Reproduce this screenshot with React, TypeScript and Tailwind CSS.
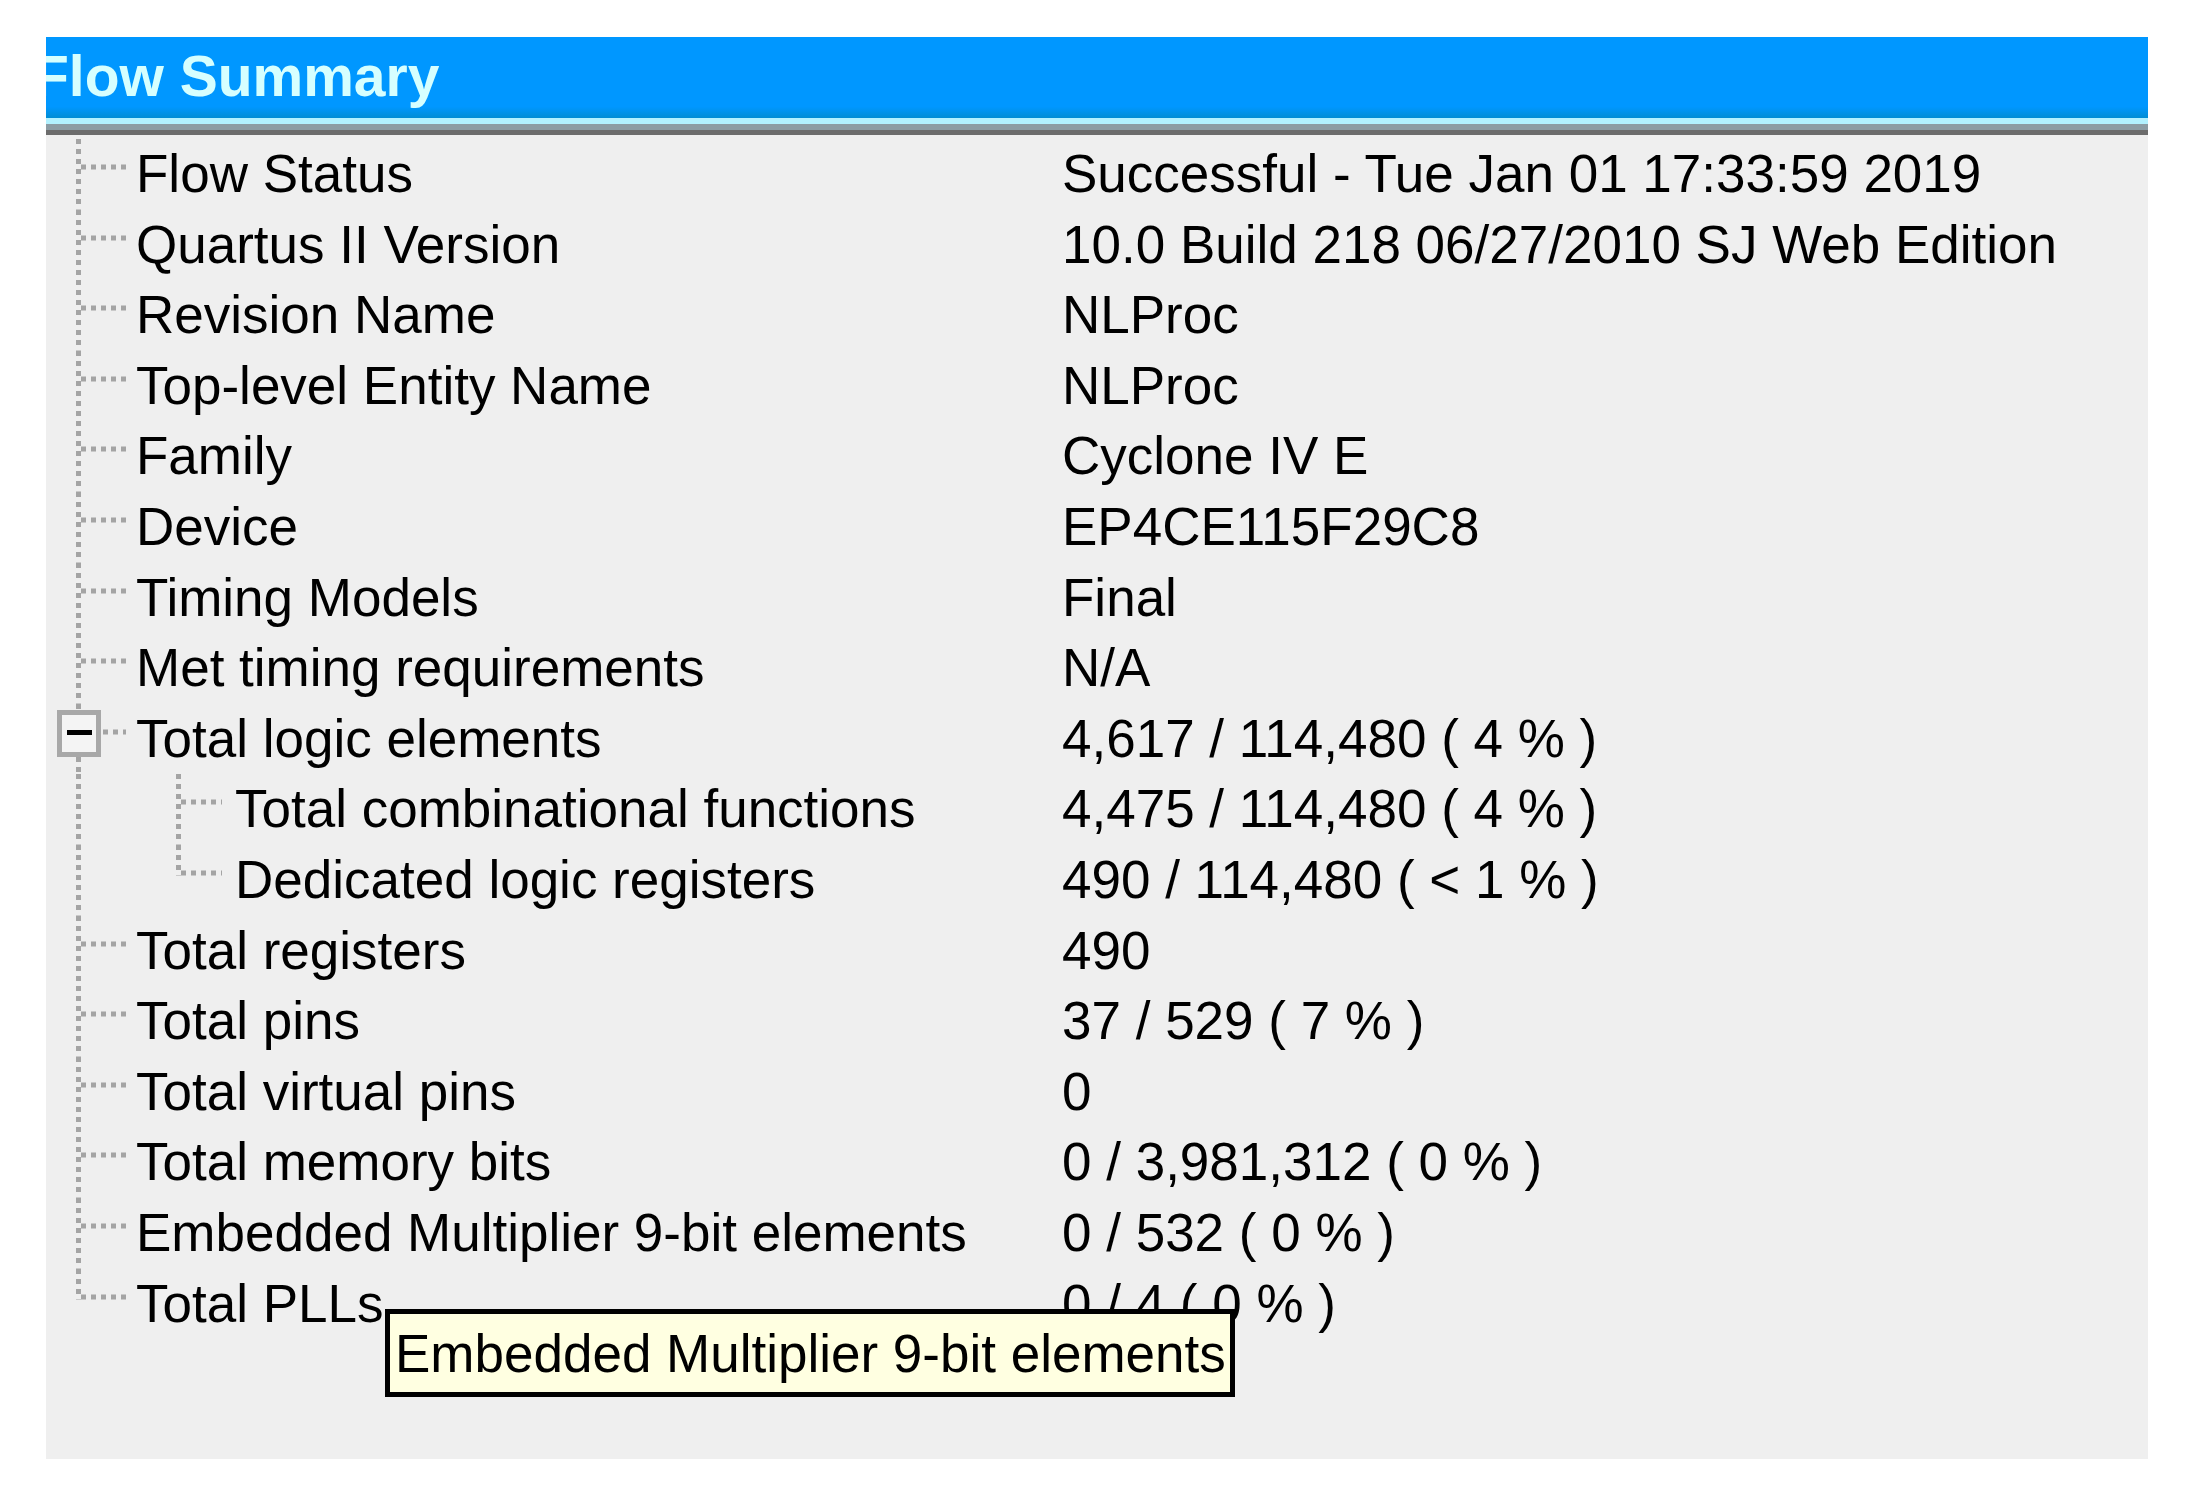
import React from "react";

type Kind = "mid" | "last" | "parent" | "childMid" | "childLast";

interface Row {
  label: string;
  value: string;
  kind: Kind;
}

const rows: Row[] = [
  { label: "Flow Status", value: "Successful - Tue Jan 01 17:33:59 2019", kind: "mid" },
  { label: "Quartus II Version", value: "10.0 Build 218 06/27/2010 SJ Web Edition", kind: "mid" },
  { label: "Revision Name", value: "NLProc", kind: "mid" },
  { label: "Top-level Entity Name", value: "NLProc", kind: "mid" },
  { label: "Family", value: "Cyclone IV E", kind: "mid" },
  { label: "Device", value: "EP4CE115F29C8", kind: "mid" },
  { label: "Timing Models", value: "Final", kind: "mid" },
  { label: "Met timing requirements", value: "N/A", kind: "mid" },
  { label: "Total logic elements", value: "4,617 / 114,480 ( 4 % )", kind: "parent" },
  { label: "Total combinational functions", value: "4,475 / 114,480 ( 4 % )", kind: "childMid" },
  { label: "Dedicated logic registers", value: "490 / 114,480 ( < 1 % )", kind: "childLast" },
  { label: "Total registers", value: "490", kind: "mid" },
  { label: "Total pins", value: "37 / 529 ( 7 % )", kind: "mid" },
  { label: "Total virtual pins", value: "0", kind: "mid" },
  { label: "Total memory bits", value: "0 / 3,981,312 ( 0 % )", kind: "mid" },
  { label: "Embedded Multiplier 9-bit elements", value: "0 / 532 ( 0 % )", kind: "mid" },
  { label: "Total PLLs", value: "0 / 4 ( 0 % )", kind: "last" },
];

const ROW_H = 70.6;
const LINE_Y = 28;
const DOT = "#a4a4a4";

// dotted tree connectors, drawn like the old win32 tree view
function Gutter({ kind }: { kind: Kind }) {
  const child = kind === "childMid" || kind === "childLast";
  const width = child ? 189 : 90;
  const dash = { stroke: DOT, strokeWidth: 5, strokeDasharray: "5 5" };

  return (
    <svg width={width} height={ROW_H} className="shrink-0">
      {kind === "parent" ? (
        <>
          <line x1={32.5} y1={0} x2={32.5} y2={6} {...dash} />
          <line x1={32.5} y1={53} x2={32.5} y2={ROW_H} {...dash} />
          <rect x={13.5} y={8.5} width={39} height={42} fill="#f4f4f4" stroke="#a8a8a8" strokeWidth={5} />
          <rect x={21} y={26} width={25} height={5} fill="#000" />
          <line x1={57} y1={LINE_Y} x2={80} y2={LINE_Y} {...dash} />
        </>
      ) : (
        <>
          <line x1={32.5} y1={0} x2={32.5} y2={kind === "last" ? LINE_Y + 2.5 : ROW_H} {...dash} />
          {child ? (
            <>
              <line
                x1={132.5}
                y1={0}
                x2={132.5}
                y2={kind === "childLast" ? LINE_Y + 2.5 : ROW_H}
                {...dash}
              />
              <line x1={135} y1={LINE_Y} x2={176} y2={LINE_Y} {...dash} />
            </>
          ) : (
            <line x1={35} y1={LINE_Y} x2={80} y2={LINE_Y} {...dash} />
          )}
        </>
      )}
    </svg>
  );
}

export default function App() {
  return (
    <div className="min-h-screen bg-white pt-[37px] pl-[46px] font-['Liberation_Sans',Arial,sans-serif]">
      <div className="relative flex h-[1422px] w-[2102px] flex-col bg-[#efefef]">
        <div className="h-[81px] overflow-hidden bg-[linear-gradient(to_bottom,#0097ff_0%,#0097ff_86%,#008dd4_100%)]">
          <div className="-ml-[12px] whitespace-nowrap pt-[4px] text-[57px] font-bold leading-[71px] text-[#d6ffff]">
            Flow Summary
          </div>
        </div>
        <div className="h-[6px] bg-[#b2f1ff]" />
        <div className="h-[6px] bg-[#8c9ca4]" />
        <div className="h-[5px] bg-[#6c6c6c]" />

        <div className="flex flex-col pt-[4px] text-[53px] leading-[70.6px] text-black">
          {rows.map((r) => (
            <div key={r.label} className="grid h-[70.6px] grid-cols-[1016px_1fr]">
              <div className="flex">
                <Gutter kind={r.kind} />
                <span className="whitespace-nowrap">{r.label}</span>
              </div>
              <span className="whitespace-nowrap">{r.value}</span>
            </div>
          ))}
        </div>

        <div className="absolute left-[339px] top-[1272px] flex h-[88px] w-[850px] items-center border-[5px] border-black bg-[#ffffe1] pl-[5px] text-[53px] leading-none text-black whitespace-nowrap">
          Embedded Multiplier 9-bit elements
        </div>
      </div>
    </div>
  );
}
